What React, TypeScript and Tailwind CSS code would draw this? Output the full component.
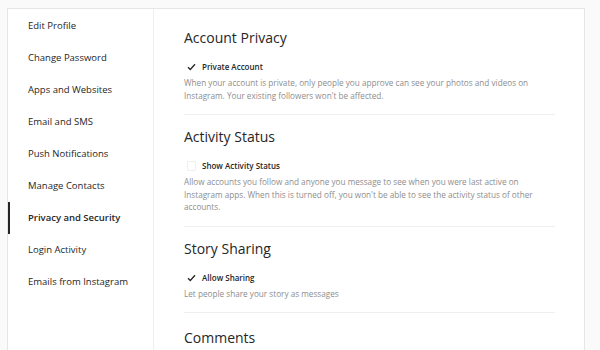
import React from "react";

const items = [
  "Edit Profile",
  "Change Password",
  "Apps and Websites",
  "Email and SMS",
  "Push Notifications",
  "Manage Contacts",
  "Privacy and Security",
  "Login Activity",
  "Emails from Instagram",
];

function Check({ checked }: { checked: boolean }) {
  return (
    <span className="w-[10px] h-[10px] flex items-center justify-center">
      {checked ? (
        <svg width="9" height="8" viewBox="0 0 9 8">
          <path d="M1 4.2 L3.3 6.5 L8 1.2" fill="none" stroke="#262626" strokeWidth="1.3" />
        </svg>
      ) : (
        <span className="w-[9px] h-[10px] border border-[#efefef] rounded-[1px] bg-white" />
      )}
    </span>
  );
}

function Section({
  title,
  label,
  checked,
  desc,
  last,
}: {
  title: string;
  label: string;
  checked: boolean;
  desc: string;
  last?: boolean;
}) {
  return (
    <div className={last ? "pt-[15px]" : "pt-[12px] pb-[12px] border-b border-[#efefef]"}>
      <div className="text-[14px] leading-[20px] text-[#262626]">{title}</div>
      {label && (
        <>
          <div className="mt-[12px] flex items-center gap-[6px] h-[14px]">
            <span className="ml-[2px]">
              <Check checked={checked} />
            </span>
            <span className="text-[8px] font-semibold text-[#262626] leading-[14px]">{label}</span>
          </div>
          <div className="mt-[3px] text-[8.2px] leading-[12.5px] text-[#8e8e8e] w-[360px]">{desc}</div>
        </>
      )}
    </div>
  );
}

export default function App() {
  return (
    <div
      className="w-[600px] h-[350px] bg-[#fafafa] overflow-hidden pt-[8px] pl-[7px]"
      style={{ fontFamily: '"Open Sans", "Noto Sans", sans-serif' }}
    >
      <div className="w-[578px] h-[400px] bg-white border border-[#e6e6e6] flex">
        <div className="w-[146px] shrink-0 border-r border-[#efefef] pt-[1px]">
          {items.map((it) => {
            const active = it === "Privacy and Security";
            return (
              <div
                key={it}
                className={
                  "h-[32px] flex items-center text-[9.5px] text-[#262626] " +
                  (active ? "border-l-2 border-[#262626] pl-[18px] font-semibold" : "pl-[20px]")
                }
              >
                {it}
              </div>
            );
          })}
        </div>
        <div className="flex-1 pl-[30px] pr-[29px] pt-[7px]">
          <Section
            title="Account Privacy"
            label="Private Account"
            checked
            desc="When your account is private, only people you approve can see your photos and videos on Instagram. Your existing followers won't be affected."
          />
          <Section
            title="Activity Status"
            label="Show Activity Status"
            checked={false}
            desc="Allow accounts you follow and anyone you message to see when you were last active on Instagram apps. When this is turned off, you won't be able to see the activity status of other accounts."
          />
          <Section
            title="Story Sharing"
            label="Allow Sharing"
            checked
            desc="Let people share your story as messages"
          />
          <Section title="Comments" label="" checked={false} desc="" last />
        </div>
      </div>
    </div>
  );
}
